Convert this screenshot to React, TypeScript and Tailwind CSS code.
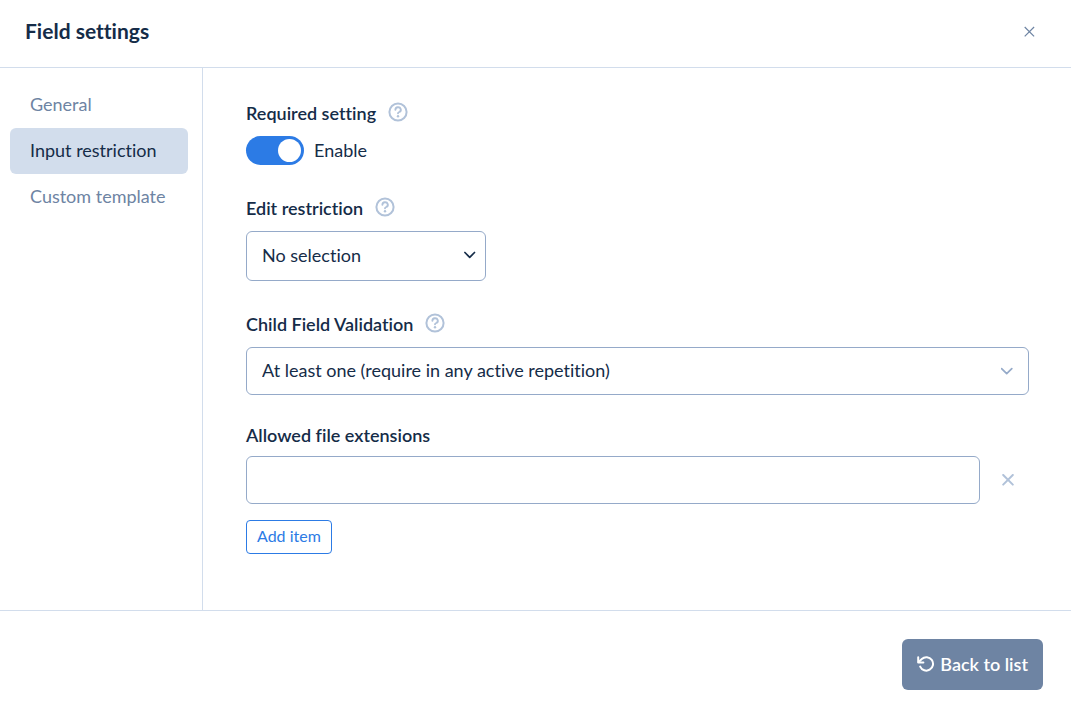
import { useState } from "react";

const tabs = ["General", "Input restriction", "Custom template"];

function HelpIcon() {
  return (
    <svg viewBox="0 0 20 20" className="h-5 w-5" fill="none" stroke="currentColor" strokeWidth="2" strokeLinecap="round" strokeLinejoin="round" aria-hidden="true">
      <circle cx="10" cy="10" r="8.6" />
      <path d="M7.4 7.7a2.7 2.5 0 1 1 3.9 2.3c-.9.4-1.3.7-1.3 1.3" strokeWidth="1.9" />
      <circle cx="10" cy="14.2" r="1.2" fill="currentColor" stroke="none" />
    </svg>
  );
}

function FieldLabel({ text, htmlFor }: { text: string; htmlFor: string }) {
  return (
    <div className="flex h-6 items-center gap-3">
      <label htmlFor={htmlFor} className="pb-0.5 text-lg/6 font-semibold">
        {text}
      </label>
      <button type="button" aria-label={`Help: ${text}`} className="mb-1 text-[#b1c2d9]">
        <HelpIcon />
      </button>
    </div>
  );
}

export default function App() {
  const [tab, setTab] = useState("Input restriction");
  const [required, setRequired] = useState(true);
  const [items, setItems] = useState([""]);

  return (
    <div className="flex min-h-screen flex-col bg-white font-['Lato',sans-serif] text-lg/6 text-[#152c48] [font-variant-ligatures:none]">
      <header className="flex h-17 items-center justify-between border-b border-[#d2ddec] pr-9 pb-1 pl-[25px]">
        <h1 className="pb-0.5 text-[21px]/6 font-bold">Field settings</h1>
        <button type="button" aria-label="Close" className="text-[#6e84a3]">
          <svg viewBox="0 0 12 12" className="h-3 w-3" fill="none" stroke="currentColor" strokeWidth="1.2" aria-hidden="true">
            <path d="M1.7 1l9.4 9.4M11.1 1l-9.4 9.4" />
          </svg>
        </button>
      </header>

      <div className="flex flex-1">
        <nav className="flex w-[203px] shrink-0 flex-col border-r border-[#d2ddec] pt-3.5 pr-3.5 pl-2.5">
          {tabs.map((name) => (
            <button
              key={name}
              type="button"
              onClick={() => setTab(name)}
              className={`h-[46px] rounded-md px-5 pb-0.5 text-left whitespace-nowrap ${
                name === tab ? "bg-[#d2ddec] text-[#152c48]" : "text-[#6e84a3]"
              }`}
            >
              {name}
            </button>
          ))}
        </nav>

        <main className="min-w-0 flex-1 pt-[34px] pr-[42px] pb-14 pl-[43px]">
          <div className="mb-8">
            <FieldLabel text="Required setting" htmlFor="required" />
            <label className="mt-2.5 flex h-[29px] items-center gap-2.5">
              <input
                id="required"
                type="checkbox"
                role="switch"
                checked={required}
                onChange={(e) => setRequired(e.target.checked)}
                className="peer sr-only"
              />
              <span className="flex h-[29px] w-[58px] items-center rounded-full bg-[#b1c2d9] px-[3px] peer-checked:justify-end peer-checked:bg-[#2c7be5]">
                <span className="h-[23px] w-[23px] rounded-full bg-white" />
              </span>
              <span className="pb-0.5">Enable</span>
            </label>
          </div>

          <div className="mb-8">
            <FieldLabel text="Edit restriction" htmlFor="edit-restriction" />
            <div className="relative mt-2.5 w-60">
              <select id="edit-restriction" className="block h-[50px] w-full appearance-none rounded-md border border-[#95aac9] bg-white px-[15px] pb-0.5">
                <option>No selection</option>
              </select>
              <svg viewBox="0 0 12 8" className="pointer-events-none absolute top-5 right-2.5 h-2 w-3" fill="none" stroke="currentColor" strokeWidth="1.7" strokeLinecap="round" strokeLinejoin="round" aria-hidden="true">
                <path d="M.9 1.5L5.7 6.3l4.8-4.8" />
              </svg>
            </div>
          </div>

          <div className="mb-7">
            <FieldLabel text="Child Field Validation" htmlFor="child-validation" />
            <div className="relative mt-2.5">
              <select id="child-validation" className="block h-12 w-full appearance-none rounded-md border border-[#95aac9] bg-white px-[15px] pb-0.5">
                <option>At least one (require in any active repetition)</option>
              </select>
              <svg viewBox="0 0 12 8" className="pointer-events-none absolute top-5 right-4 h-2 w-3 text-[#95aac9]" fill="none" stroke="currentColor" strokeWidth="1.7" strokeLinecap="round" strokeLinejoin="round" aria-hidden="true">
                <path d="M.6 1.6L5.7 6.7l5.1-5.1" />
              </svg>
            </div>
          </div>

          <div>
            <label htmlFor="extension-0" className="block text-lg/6 font-semibold">
              Allowed file extensions
            </label>
            <div className="mt-[9px] flex flex-col gap-4">
              {items.map((item, i) => (
                <div key={i} className="flex items-center">
                  <input
                    id={`extension-${i}`}
                    type="text"
                    aria-label="Allowed file extensions"
                    value={item}
                    onChange={(e) => setItems(items.map((v, n) => (n === i ? e.target.value : v)))}
                    className="h-12 min-w-0 flex-1 rounded-md border border-[#95aac9] px-[15px]"
                  />
                  <button
                    type="button"
                    aria-label="Remove item"
                    onClick={() => setItems(items.filter((_, n) => n !== i))}
                    className="flex w-[49px] justify-center pl-1.5 text-[#b1c2d9]"
                  >
                    <svg viewBox="0 0 12 12" className="h-3 w-3" fill="none" stroke="currentColor" strokeWidth="2" strokeLinecap="round" aria-hidden="true">
                      <path d="M1.2 1l9.6 9.6M10.8 1l-9.6 9.6" />
                    </svg>
                  </button>
                </div>
              ))}
            </div>
            <button
              type="button"
              onClick={() => setItems([...items, ""])}
              className="mt-4 h-[34px] rounded border border-[#2c7be5] px-2.5 pb-0.5 text-base/6 text-[#2c7be5]"
            >
              Add item
            </button>
          </div>
        </main>
      </div>

      <footer className="flex h-26 items-center justify-end border-t border-[#d2ddec] px-7 pt-1">
        <button type="button" className="flex h-[51px] items-center gap-[5px] rounded-md bg-[#6e84a3] px-[15px] pb-0.5 font-semibold text-white">
          <svg viewBox="0 0 18 16" className="h-4 w-[18px]" fill="none" stroke="currentColor" strokeWidth="2" strokeLinecap="round" strokeLinejoin="round" aria-hidden="true">
            <path d="M1.2 1.2v5.2h5.2" />
            <path d="M1.6 6L4.8 3A6.7 6.7 0 1 1 3.2 10.6" />
          </svg>
          Back to list
        </button>
      </footer>
    </div>
  );
}
